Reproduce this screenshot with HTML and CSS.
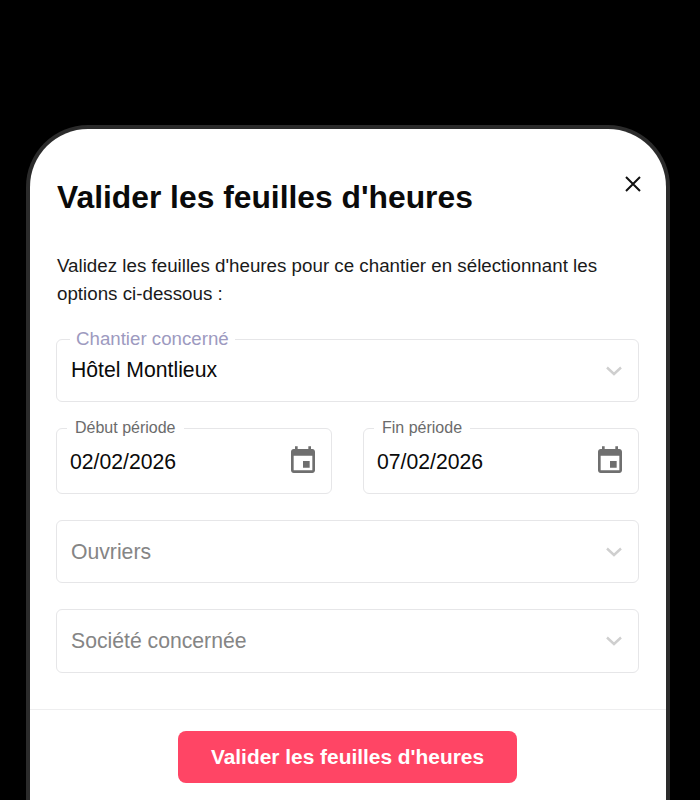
FILE: index.html
```html
<!DOCTYPE html>
<html lang="fr">
<head>
  <meta charset="UTF-8">
  <title>Valider les feuilles d'heures</title>
  <link rel="stylesheet" href="styles.css">
</head>
<body>
  <div class="sheet">
    <button class="close" type="button" aria-label="Fermer">
      <svg width="24" height="24" viewBox="0 0 24 24"><path d="M5 5l14 14M19 5L5 19" fill="none" stroke="#111" stroke-width="2"/></svg>
    </button>

    <div class="content">
      <h1>Valider les feuilles d'heures</h1>
      <p class="intro">Validez les feuilles d'heures pour ce chantier en sélectionnant les options ci-dessous :</p>

      <form class="form">
        <!-- Chantier -->
        <div class="field field-main">
          <span class="label label-main">Chantier concerné</span>
          <span class="value value-main">Hôtel Montlieux</span>
          <svg class="chevron" width="18" height="10" viewBox="0 0 18 10"><path d="M2 1.5l7 6.5 7-6.5" fill="none" stroke="#cfcfcf" stroke-width="2.4"/></svg>
        </div>

        <!-- Période -->
        <div class="dates">
          <div class="field field-date">
            <span class="label label-date">Début période</span>
            <span class="value value-date">02/02/2026</span>
            <svg width="32" height="32" viewBox="0 0 24 24"><path fill="#6f6f6f" d="M17 12h-5v5h5v-5zM16 1v2H8V1H6v2H5c-1.1 0-2 .9-2 2v14c0 1.1.9 2 2 2h14c1.1 0 2-.9 2-2V5c0-1.1-.9-2-2-2h-1V1h-2zm3 18H5V8h14v11z"/></svg>
          </div>
          <div class="field field-date">
            <span class="label label-date">Fin période</span>
            <span class="value value-date">07/02/2026</span>
            <svg width="32" height="32" viewBox="0 0 24 24"><path fill="#6f6f6f" d="M17 12h-5v5h5v-5zM16 1v2H8V1H6v2H5c-1.1 0-2 .9-2 2v14c0 1.1.9 2 2 2h14c1.1 0 2-.9 2-2V5c0-1.1-.9-2-2-2h-1V1h-2zm3 18H5V8h14v11z"/></svg>
          </div>
        </div>

        <!-- Ouvriers / société -->
        <div class="field field-main">
          <span class="placeholder">Ouvriers</span>
          <svg class="chevron" width="18" height="10" viewBox="0 0 18 10"><path d="M2 1.5l7 6.5 7-6.5" fill="none" stroke="#cfcfcf" stroke-width="2.4"/></svg>
        </div>
        <div class="field field-company">
          <span class="placeholder">Société concernée</span>
          <svg class="chevron" width="18" height="10" viewBox="0 0 18 10"><path d="M2 1.5l7 6.5 7-6.5" fill="none" stroke="#cfcfcf" stroke-width="2.4"/></svg>
        </div>
      </form>
    </div>

    <div class="footer">
      <button class="submit" type="button">Valider les feuilles d'heures</button>
    </div>
  </div>
</body>
</html>
```

FILE: styles.css
```css
html, body {
  height: 100%;
}
body {
  margin: 0;
  background: #000;
  font-family: "Liberation Sans", Arial, sans-serif;
  overflow: hidden;
}
.sheet {
  position: relative;
  box-sizing: border-box;
  width: 644px;
  height: 675px;
  margin: 125px 0 0 26px;
  background: #fff;
  border: 4px solid #2b2b2b;
  border-bottom: none;
  border-radius: 62px 62px 0 0;
}
.close {
  position: absolute;
  top: 43px;
  right: 21px;
  width: 24px;
  height: 24px;
  padding: 0;
  background: none;
  border: none;
  cursor: pointer;
}
.content {
  padding: 0 27px 0 26px;
}
h1 {
  margin: 0;
  padding: 48px 0 0 1px;
  font-size: 31.8px;
  line-height: 40px;
  font-weight: 700;
  color: #0a0a0a;
}
.intro {
  margin: 35px 0 0;
  padding-left: 1px;
  font-size: 18.75px;
  line-height: 28px;
  color: #1a1a1a;
}
.form {
  display: flex;
  flex-direction: column;
  gap: 26px;
  margin-top: 31px;
}
.dates {
  display: flex;
  justify-content: space-between;
}
.field {
  position: relative;
  box-sizing: border-box;
  display: flex;
  align-items: center;
  justify-content: space-between;
  background: #fff;
  border: 1px solid #e6e6e8;
  border-radius: 6px;
}
.field-main {
  height: 63px;
  padding: 0 15px 0 14px;
}
.field-company {
  height: 64px;
  padding: 0 15px 0 14px;
}
.field-date {
  width: 276px;
  height: 66px;
  padding: 0 12px 0 13px;
}
.label {
  position: absolute;
  background: #fff;
}
.label-main {
  top: -12px;
  left: 13px;
  padding: 0 6px;
  font-size: 18.7px;
  line-height: 22px;
  color: #9d9abf;
}
.label-date {
  top: -10px;
  left: 10px;
  padding: 0 8px;
  font-size: 16px;
  line-height: 18px;
  color: #6b6b6b;
}
.value {
  font-size: 21.2px;
  color: #0a0a0a;
}
.value-main {
  margin-bottom: 2px;
}
.value-date {
  margin-top: 2px;
}
.placeholder {
  font-size: 21.2px;
  color: #858585;
}
.footer {
  display: flex;
  justify-content: center;
  margin-top: 36px;
  padding: 21px 1px 0 0;
  border-top: 1px solid #eeeeef;
}
.submit {
  width: 339px;
  height: 52px;
  padding: 0;
  font-family: inherit;
  font-size: 20.9px;
  font-weight: 700;
  color: #fff;
  background: #ff4565;
  border: none;
  border-radius: 8px;
  cursor: pointer;
}
```
